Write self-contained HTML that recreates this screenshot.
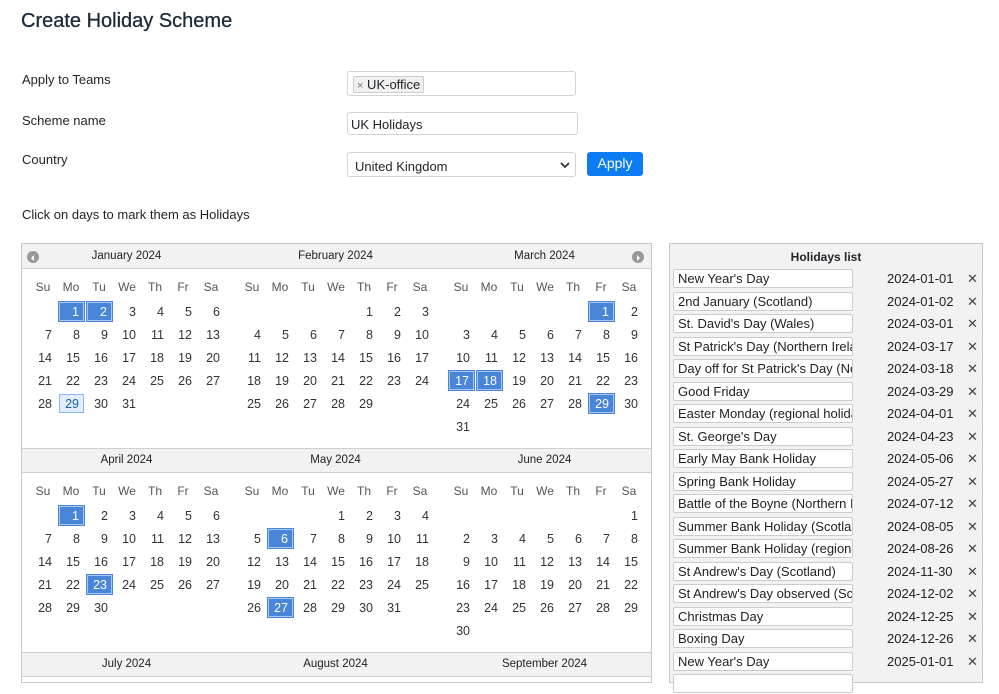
<!DOCTYPE html>
<html><head><meta charset="utf-8"><style>
*{box-sizing:border-box}
body{margin:0;width:999px;height:675px;overflow:hidden;background:#fff;font-family:"Liberation Sans",sans-serif;color:#212529;position:relative}
.a{position:absolute}
h1{position:absolute;left:21px;top:10px;margin:0;font-size:20px;font-weight:normal;color:#1c2b3a;-webkit-text-stroke:0.3px #1c2b3a}
.lbl{position:absolute;left:22px;font-size:13px}
.inp{position:absolute;border:1px solid #ced4da;border-radius:3px;background:#fff;font-size:13px}
.cal{position:absolute;left:21px;top:243px;width:631px;height:440px;border:1px solid #c8c8c8;background:#fff}
.hd{position:absolute;left:0;width:629px;height:25px;background:#f2f2f2;border-bottom:1px solid #cfcfcf}
.mt{position:absolute;font-size:11.5px;color:#222;width:209px;text-align:center}
table{position:absolute;border-collapse:separate;border-spacing:0;font-size:12.5px;color:#333}
td{width:28px;height:23px;text-align:right;padding:0 5px 0 0}
tr.dn td{height:26px;color:#555;text-align:center;padding:0;font-size:12px}
td.s span{display:inline-block;background:#4a86d8;color:#fff;border:1px solid #a9c6ee;outline:1px solid #4a86d8;width:25px;height:19px;line-height:18px;text-align:right;padding-right:4px;margin-right:-4px}
td.t span{display:inline-block;background:#e3eefc;color:#1a5fb4;border:1px solid #8db6ea;width:25px;height:19px;line-height:18px;text-align:right;padding-right:4px;margin-right:-4px}
.arr{position:absolute;top:7px;width:12px;height:12px;border-radius:50%;background:#999}
.hl{position:absolute;left:669px;top:243px;width:314px;height:440px;border:1px solid #c8c8c8;background:#f2f2f2}
.row{position:absolute;left:3px;height:20px;width:310px;font-size:13px}
.row .n{position:absolute;left:0;top:0;width:180px;height:19px;background:#fff;border:1px solid #ccc;border-radius:2px;padding:1px 0 0 4px;white-space:nowrap;overflow:hidden;color:#222}
.row .d{position:absolute;left:214px;top:2px;color:#222}
.row .x{position:absolute;left:294px;top:2px;font-size:13px;color:#444}
</style></head><body>
<h1>Create Holiday Scheme</h1>
<div class="lbl" style="top:72px">Apply to Teams</div>
<div class="lbl" style="top:113px">Scheme name</div>
<div class="lbl" style="top:152px">Country</div>
<div class="inp" style="left:347px;top:71px;width:229px;height:25px"><span class="a" style="left:5px;top:4px;height:17px;padding:0 3px;background:#f0f0f0;border:1px solid #ccc;border-radius:2px;font-size:13px;line-height:15px"><span style="color:#777;font-size:11px">×</span> UK-office</span></div>
<div class="inp" style="left:347px;top:112px;width:231px;height:23px;padding:4px 0 0 3px">UK Holidays</div>
<div class="inp" style="left:347px;top:152px;width:229px;height:25px;padding:6px 0 0 7px">United Kingdom<svg class="a" style="left:212px;top:8px" width="10" height="8"><path d="M1 2l4 4 4-4" stroke="#333" stroke-width="1.8" fill="none"/></svg></div>
<div class="a" style="left:587px;top:152px;width:56px;height:24px;background:#0d7cf2;border-radius:3px;color:#fff;font-size:14px;text-align:center;line-height:23px">Apply</div>
<div class="lbl" style="top:207px">Click on days to mark them as Holidays</div>

<div class="cal">
<div class="hd" style="top:0"></div>
<div class="hd" style="top:204px;border-top:1px solid #cfcfcf"></div>
<div class="hd" style="top:408px;border-top:1px solid #cfcfcf"></div>
<div class="arr" style="left:5px"><svg width="12" height="12"><path d="M7 3L4 6l3 3z" fill="#fff"/></svg></div>
<div class="arr" style="left:610px"><svg width="12" height="12"><path d="M5 3l3 3-3 3z" fill="#fff"/></svg></div>
<div class="mt" style="left:0;top:6px">January 2024</div>
<div class="mt" style="left:209px;top:6px">February 2024</div>
<div class="mt" style="left:418px;top:6px">March 2024</div>
<div class="mt" style="left:0;top:210px">April 2024</div>
<div class="mt" style="left:209px;top:210px">May 2024</div>
<div class="mt" style="left:418px;top:210px">June 2024</div>
<div class="mt" style="left:0;top:414px">July 2024</div>
<div class="mt" style="left:209px;top:414px">August 2024</div>
<div class="mt" style="left:418px;top:414px">September 2024</div>

<table style="left:7px;top:30px"><tr class="dn"><td>Su</td><td>Mo</td><td>Tu</td><td>We</td><td>Th</td><td>Fr</td><td>Sa</td></tr>
<tr><td></td><td class="s"><span>1</span></td><td class="s"><span>2</span></td><td>3</td><td>4</td><td>5</td><td>6</td></tr>
<tr><td>7</td><td>8</td><td>9</td><td>10</td><td>11</td><td>12</td><td>13</td></tr>
<tr><td>14</td><td>15</td><td>16</td><td>17</td><td>18</td><td>19</td><td>20</td></tr>
<tr><td>21</td><td>22</td><td>23</td><td>24</td><td>25</td><td>26</td><td>27</td></tr>
<tr><td>28</td><td class="t"><span>29</span></td><td>30</td><td>31</td><td></td><td></td><td></td></tr></table>

<table style="left:216px;top:30px"><tr class="dn"><td>Su</td><td>Mo</td><td>Tu</td><td>We</td><td>Th</td><td>Fr</td><td>Sa</td></tr>
<tr><td></td><td></td><td></td><td></td><td>1</td><td>2</td><td>3</td></tr>
<tr><td>4</td><td>5</td><td>6</td><td>7</td><td>8</td><td>9</td><td>10</td></tr>
<tr><td>11</td><td>12</td><td>13</td><td>14</td><td>15</td><td>16</td><td>17</td></tr>
<tr><td>18</td><td>19</td><td>20</td><td>21</td><td>22</td><td>23</td><td>24</td></tr>
<tr><td>25</td><td>26</td><td>27</td><td>28</td><td>29</td><td></td><td></td></tr></table>

<table style="left:425px;top:30px"><tr class="dn"><td>Su</td><td>Mo</td><td>Tu</td><td>We</td><td>Th</td><td>Fr</td><td>Sa</td></tr>
<tr><td></td><td></td><td></td><td></td><td></td><td class="s"><span>1</span></td><td>2</td></tr>
<tr><td>3</td><td>4</td><td>5</td><td>6</td><td>7</td><td>8</td><td>9</td></tr>
<tr><td>10</td><td>11</td><td>12</td><td>13</td><td>14</td><td>15</td><td>16</td></tr>
<tr><td class="s"><span>17</span></td><td class="s"><span>18</span></td><td>19</td><td>20</td><td>21</td><td>22</td><td>23</td></tr>
<tr><td>24</td><td>25</td><td>26</td><td>27</td><td>28</td><td class="s"><span>29</span></td><td>30</td></tr>
<tr><td>31</td><td></td><td></td><td></td><td></td><td></td><td></td></tr></table>

<table style="left:7px;top:234px"><tr class="dn"><td>Su</td><td>Mo</td><td>Tu</td><td>We</td><td>Th</td><td>Fr</td><td>Sa</td></tr>
<tr><td></td><td class="s"><span>1</span></td><td>2</td><td>3</td><td>4</td><td>5</td><td>6</td></tr>
<tr><td>7</td><td>8</td><td>9</td><td>10</td><td>11</td><td>12</td><td>13</td></tr>
<tr><td>14</td><td>15</td><td>16</td><td>17</td><td>18</td><td>19</td><td>20</td></tr>
<tr><td>21</td><td>22</td><td class="s"><span>23</span></td><td>24</td><td>25</td><td>26</td><td>27</td></tr>
<tr><td>28</td><td>29</td><td>30</td><td></td><td></td><td></td><td></td></tr></table>

<table style="left:216px;top:234px"><tr class="dn"><td>Su</td><td>Mo</td><td>Tu</td><td>We</td><td>Th</td><td>Fr</td><td>Sa</td></tr>
<tr><td></td><td></td><td></td><td>1</td><td>2</td><td>3</td><td>4</td></tr>
<tr><td>5</td><td class="s"><span>6</span></td><td>7</td><td>8</td><td>9</td><td>10</td><td>11</td></tr>
<tr><td>12</td><td>13</td><td>14</td><td>15</td><td>16</td><td>17</td><td>18</td></tr>
<tr><td>19</td><td>20</td><td>21</td><td>22</td><td>23</td><td>24</td><td>25</td></tr>
<tr><td>26</td><td class="s"><span>27</span></td><td>28</td><td>29</td><td>30</td><td>31</td><td></td></tr></table>

<table style="left:425px;top:234px"><tr class="dn"><td>Su</td><td>Mo</td><td>Tu</td><td>We</td><td>Th</td><td>Fr</td><td>Sa</td></tr>
<tr><td></td><td></td><td></td><td></td><td></td><td></td><td>1</td></tr>
<tr><td>2</td><td>3</td><td>4</td><td>5</td><td>6</td><td>7</td><td>8</td></tr>
<tr><td>9</td><td>10</td><td>11</td><td>12</td><td>13</td><td>14</td><td>15</td></tr>
<tr><td>16</td><td>17</td><td>18</td><td>19</td><td>20</td><td>21</td><td>22</td></tr>
<tr><td>23</td><td>24</td><td>25</td><td>26</td><td>27</td><td>28</td><td>29</td></tr>
<tr><td>30</td><td></td><td></td><td></td><td></td><td></td><td></td></tr></table>
</div>

<div class="hl">
<div class="a" style="left:0;top:6px;width:312px;text-align:center;font-size:12px;font-weight:bold">Holidays list</div>
<div class="row" style="top:25px"><div class="n">New Year's Day</div><div class="d">2024-01-01</div><div class="x">✕</div></div>
<div class="row" style="top:48px"><div class="n">2nd January (Scotland)</div><div class="d">2024-01-02</div><div class="x">✕</div></div>
<div class="row" style="top:70px"><div class="n">St. David's Day (Wales)</div><div class="d">2024-03-01</div><div class="x">✕</div></div>
<div class="row" style="top:93px"><div class="n">St Patrick's Day (Northern Ireland)</div><div class="d">2024-03-17</div><div class="x">✕</div></div>
<div class="row" style="top:115px"><div class="n">Day off for St Patrick's Day (Northern Ireland)</div><div class="d">2024-03-18</div><div class="x">✕</div></div>
<div class="row" style="top:138px"><div class="n">Good Friday</div><div class="d">2024-03-29</div><div class="x">✕</div></div>
<div class="row" style="top:160px"><div class="n">Easter Monday (regional holiday)</div><div class="d">2024-04-01</div><div class="x">✕</div></div>
<div class="row" style="top:183px"><div class="n">St. George's Day</div><div class="d">2024-04-23</div><div class="x">✕</div></div>
<div class="row" style="top:205px"><div class="n">Early May Bank Holiday</div><div class="d">2024-05-06</div><div class="x">✕</div></div>
<div class="row" style="top:228px"><div class="n">Spring Bank Holiday</div><div class="d">2024-05-27</div><div class="x">✕</div></div>
<div class="row" style="top:250px"><div class="n">Battle of the Boyne (Northern Ireland)</div><div class="d">2024-07-12</div><div class="x">✕</div></div>
<div class="row" style="top:273px"><div class="n">Summer Bank Holiday (Scotland)</div><div class="d">2024-08-05</div><div class="x">✕</div></div>
<div class="row" style="top:295px"><div class="n">Summer Bank Holiday (regional holiday)</div><div class="d">2024-08-26</div><div class="x">✕</div></div>
<div class="row" style="top:318px"><div class="n">St Andrew's Day (Scotland)</div><div class="d">2024-11-30</div><div class="x">✕</div></div>
<div class="row" style="top:340px"><div class="n">St Andrew's Day observed (Scotland)</div><div class="d">2024-12-02</div><div class="x">✕</div></div>
<div class="row" style="top:363px"><div class="n">Christmas Day</div><div class="d">2024-12-25</div><div class="x">✕</div></div>
<div class="row" style="top:385px"><div class="n">Boxing Day</div><div class="d">2024-12-26</div><div class="x">✕</div></div>
<div class="row" style="top:408px"><div class="n">New Year's Day</div><div class="d">2025-01-01</div><div class="x">✕</div></div>
<div class="row" style="top:430px"><div class="n"></div></div>
</div>
</body></html>
